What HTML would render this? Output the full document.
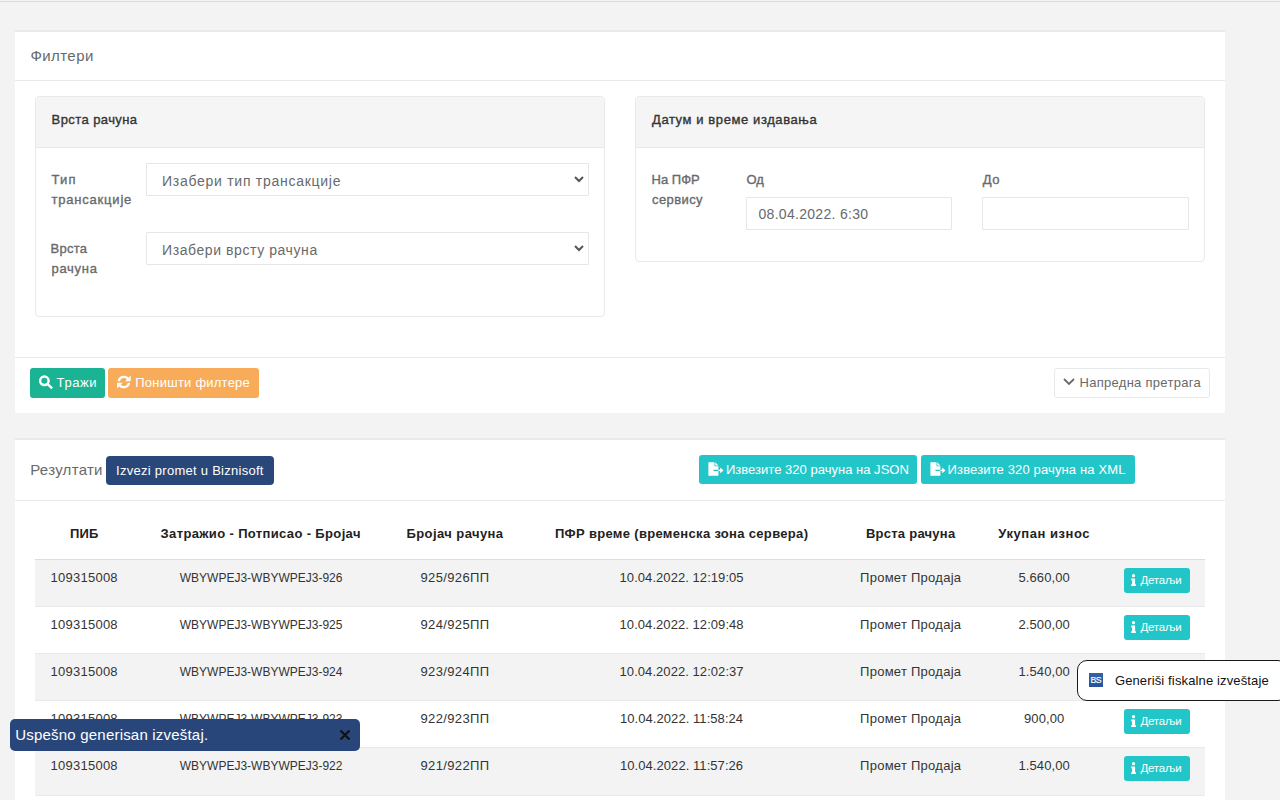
<!DOCTYPE html>
<html lang="sr">
<head>
<meta charset="utf-8">
<title>Рачуни</title>
<style>
*{box-sizing:border-box;margin:0;padding:0}
html,body{width:1280px;height:800px;overflow:hidden}
body{background:#f3f3f4;font-family:"Liberation Sans",sans-serif;font-size:13px;color:#676a6c;position:relative}
.abs{position:absolute}
.t{position:absolute;white-space:nowrap}
.topline{left:0;top:1px;width:1280px;height:1px;background:#d9dbde}
.ibox{left:15px;width:1210px;background:#fff;border-top:2px solid #e7eaec}
.hsep{left:15px;width:1210px;height:1px;background:#e7eaec}
.ttl{font-size:15px;color:#676a6c;line-height:20px}
.panel{border:1px solid #e7eaec;border-radius:4px;background:#fff;overflow:hidden}
.panel .phbg{height:51px;background:#f5f5f5;border-bottom:1px solid #e7eaec}
.ph{font-weight:normal;-webkit-text-stroke:0.35px #333;color:#333;font-size:13px;line-height:20px}
.lbl{font-weight:normal;-webkit-text-stroke:0.35px #676a6c;color:#676a6c;font-size:13px;line-height:20px}
.ctl{border:1px solid #e5e6e7;background:#fff;border-radius:1px}
.ctlt{color:#676a6c;font-size:14px;line-height:17px}
.btn{border-radius:3px;color:#fff;font-size:13px}
.btn .t{line-height:17px}
.thead{background:#fff}
.c{position:absolute;width:400px;text-align:center;white-space:nowrap;font-size:13px;line-height:18px}
.th{top:11px;font-weight:bold;color:#222}
.td{top:9px;color:#333}
.tr{border-top:1px solid #e7eaec;background:#fff}
.tr.odd{background:#f3f3f3}
.tr.first{border-top-color:#ddd}
.dbtn{position:absolute;left:1089px;top:8px;width:66px;height:25px;background:#23c6c8;border-radius:3px;color:#fff;font-size:11.5px}
.dbtn .ii{position:absolute;left:6.6px;top:5.8px}
.dbtn .t{line-height:15px;top:5px}
.c2 span{display:inline-block;transform:scaleX(0.923);transform-origin:50% 50%}
.h1{letter-spacing:0.100px}
.c1{letter-spacing:0.250px}
.h2{letter-spacing:0.358px}
.c2{letter-spacing:0.000px}
.h3{letter-spacing:0.416px}
.c3{letter-spacing:0.374px}
.h4{letter-spacing:0.321px}
.c4{letter-spacing:0.060px}
.h5{letter-spacing:0.258px}
.c5{letter-spacing:0.259px}
.h6{letter-spacing:0.560px}
.c6{letter-spacing:0.083px}
.dbtn .t{left:16.40px;letter-spacing:-0.160px}
</style>
</head>
<body>
<div class="abs topline"></div>
<!-- FILTER BOX -->
<div class="abs ibox" style="top:30px;height:383px"></div>
<div id="t_filteri" class="t ttl" style="top:46px;letter-spacing:0.432px;left:30.40px;">Филтери</div>
<div class="abs hsep" style="top:80px"></div>
<div class="abs panel" style="left:35px;top:96px;width:570px;height:221px"><div class="phbg"></div></div>
<div id="t_ph1" class="t ph" style="top:110px;letter-spacing:0.417px;left:51.60px;">Врста рачуна</div>
<div id="l_tip" class="t lbl" style="top:170px;letter-spacing:1.150px;left:51.50px;">Тип</div>
<div id="l_trans" class="t lbl" style="top:190px;letter-spacing:0.800px;left:51.50px;">трансакције</div>
<div class="abs ctl" style="left:146px;top:163px;width:443px;height:33px"></div>
<div id="s1" class="t ctlt" style="top:173px;letter-spacing:0.727px;left:162.00px;">Изабери тип трансакције</div>
<div id="l_vrsta" class="t lbl" style="top:239px;letter-spacing:0.276px;left:50.50px;">Врста</div>
<div id="l_racuna" class="t lbl" style="top:259px;letter-spacing:0.700px;left:51.50px;">рачуна</div>
<div class="abs ctl" style="left:146px;top:232px;width:443px;height:33px"></div>
<div id="s2" class="t ctlt" style="top:242px;letter-spacing:0.579px;left:162.00px;">Изабери врсту рачуна</div>
<svg class="abs" style="left:574px;top:176px" width="10" height="7" viewBox="0 0 10 7"><path d="M1 1L5 5L9 1" fill="none" stroke="#555" stroke-width="2"/></svg>
<svg class="abs" style="left:574px;top:245px" width="10" height="7" viewBox="0 0 10 7"><path d="M1 1L5 5L9 1" fill="none" stroke="#555" stroke-width="2"/></svg>
<div class="abs panel" style="left:635px;top:96px;width:570px;height:166px"><div class="phbg"></div></div>
<div id="t_ph2" class="t ph" style="top:110px;letter-spacing:0.591px;left:652.00px;">Датум и време издавања</div>
<div id="l_napfr" class="t lbl" style="top:170px;letter-spacing:0.000px;left:651.60px;">На ПФР</div>
<div id="l_servisu" class="t lbl" style="top:190px;letter-spacing:0.400px;left:652.00px;">сервису</div>
<div id="l_od" class="t lbl" style="top:170px;letter-spacing:-0.100px;left:746.50px;">Од</div>
<div id="l_do" class="t lbl" style="top:170px;letter-spacing:0.600px;left:982.80px;">До</div>
<div class="abs ctl" style="left:746px;top:197px;width:206px;height:33px"></div>
<div id="in1" class="t ctlt" style="top:206px;letter-spacing:0.297px;left:758.50px;">08.04.2022. 6:30</div>
<div class="abs ctl" style="left:982px;top:197px;width:207px;height:33px"></div>
<div class="abs hsep" style="top:357px"></div>
<div class="abs btn" style="left:30px;top:368px;width:75px;height:30px;background:#1ab394">
  <svg class="abs" style="left:8px;top:7px" width="16" height="15" viewBox="0 0 16 15"><circle cx="6.35" cy="5.8" r="4.25" fill="none" stroke="#fff" stroke-width="2.4"/><path d="M9.6 9.1L13.2 12.6" stroke="#fff" stroke-width="2.5" stroke-linecap="square"/></svg>
  <span id="t_trazi" class="t" style="top:6px;letter-spacing:0.575px;left:26.60px;">Тражи</span>
</div>
<div class="abs btn" style="left:108px;top:368px;width:151px;height:30px;background:#f8ac59">
  <svg class="abs" style="left:9px;top:7px" width="14" height="14" viewBox="0 0 14 14"><path d="M1.8 6.1A5.2 5.2 0 0 1 11.4 4.4" fill="none" stroke="#fff" stroke-width="2.3"/><path d="M13.7 0.6V6.2H8.1z" fill="#fff"/><path d="M12 7.9A5.2 5.2 0 0 1 2.4 9.6" fill="none" stroke="#fff" stroke-width="2.3"/><path d="M0.1 13.4V7.8H5.7z" fill="#fff"/></svg>
  <span id="t_ponisti" class="t" style="top:6px;letter-spacing:0.228px;left:27.30px;">Поништи филтере</span>
</div>
<div class="abs btn" style="left:1054px;top:368px;width:156px;height:30px;background:#fff;border:1px solid #e7eaec;color:#676a6c">
  <svg class="abs" style="left:7.8px;top:9.2px" width="12" height="8" viewBox="0 0 12 8"><path d="M1 1L6 5.9L11 1" fill="none" stroke="#676a6c" stroke-width="1.8"/></svg>
  <span id="t_napredna" class="t" style="top:5px;letter-spacing:0.286px;left:24.50px;">Напредна претрага</span>
</div>
<!-- RESULTS BOX -->
<div class="abs ibox" style="top:438px;height:362px"></div>
<div id="t_rez" class="t ttl" style="top:460px;letter-spacing:0.293px;left:30.20px;">Резултати</div>
<div class="abs btn" style="left:106px;top:456px;width:168px;height:29px;background:#2a4779;border-radius:4px">
  <span id="t_izvezi" class="t" style="top:6px;letter-spacing:0.270px;left:10.10px;">Izvezi promet u Biznisoft</span>
</div>
<div class="abs btn" style="left:699px;top:455px;width:218px;height:29px;background:#23c6c8">
  <svg class="abs" style="left:8.5px;top:7px" width="16" height="14" viewBox="0 0 16 14"><path d="M0.4 0.3H6.5V4.2H10.4V7.8H5.4V9.0H10.4V13.8H0.4z" fill="#fff"/><path d="M7.3 0.3L10.4 3.4H7.3z" fill="#fff"/><path d="M10.4 7.8H12.2V5.6L15.5 8.4L12.2 11.2V9.0H10.4z" fill="#fff"/></svg>
  <span id="t_json" class="t" style="top:6px;letter-spacing:0.019px;left:27.00px;">Извезите 320 рачуна на JSON</span>
</div>
<div class="abs btn" style="left:921px;top:455px;width:214px;height:29px;background:#23c6c8">
  <svg class="abs" style="left:8.5px;top:7px" width="16" height="14" viewBox="0 0 16 14"><path d="M0.4 0.3H6.5V4.2H10.4V7.8H5.4V9.0H10.4V13.8H0.4z" fill="#fff"/><path d="M7.3 0.3L10.4 3.4H7.3z" fill="#fff"/><path d="M10.4 7.8H12.2V5.6L15.5 8.4L12.2 11.2V9.0H10.4z" fill="#fff"/></svg>
  <span id="t_xml" class="t" style="top:6px;letter-spacing:0.136px;left:26.60px;">Извезите 320 рачуна на XML</span>
</div>
<div class="abs hsep" style="top:500px"></div>
<!-- TABLE -->
<div class="abs thead" style="left:35px;top:514px;width:1170px;height:45px">
  <div class="c th h1" style="left:-150.8px"><span>ПИБ</span></div>
  <div class="c th h2" style="left:25.7px"><span>Затражио - Потписао - Бројач</span></div>
  <div class="c th h3" style="left:220.0px"><span>Бројач рачуна</span></div>
  <div class="c th h4" style="left:446.6px"><span>ПФР време (временска зона сервера)</span></div>
  <div class="c th h5" style="left:675.7px"><span>Врста рачуна</span></div>
  <div class="c th h6" style="left:809.2px"><span>Укупан износ</span></div>
</div>
<div class="abs tr odd first" style="left:35px;top:559px;width:1170px;height:47px">
  <div class="c td c1" style="left:-150.8px"><span>109315008</span></div>
  <div class="c td c2" style="left:25.7px"><span>WBYWPEJ3-WBYWPEJ3-926</span></div>
  <div class="c td c3" style="left:220.0px"><span>925/926ПП</span></div>
  <div class="c td c4" style="left:446.6px"><span>10.04.2022. 12:19:05</span></div>
  <div class="c td c5" style="left:675.7px"><span>Промет Продаја</span></div>
  <div class="c td c6" style="left:809.2px"><span>5.660,00</span></div>
  <div class="dbtn"><svg class="ii" viewBox="0 0 5 12" width="5" height="12"><circle cx="2.5" cy="1.7" r="1.6" fill="#fff"/><path d="M0.2 10.2h0.9V6.2H0.2V4.5h3.9v5.7h0.8V11.9H0.2z" fill="#fff"/></svg><span class="t">Детаљи</span></div>
</div>
<div class="abs tr" style="left:35px;top:606px;width:1170px;height:47px">
  <div class="c td c1" style="left:-150.8px"><span>109315008</span></div>
  <div class="c td c2" style="left:25.7px"><span>WBYWPEJ3-WBYWPEJ3-925</span></div>
  <div class="c td c3" style="left:220.0px"><span>924/925ПП</span></div>
  <div class="c td c4" style="left:446.6px"><span>10.04.2022. 12:09:48</span></div>
  <div class="c td c5" style="left:675.7px"><span>Промет Продаја</span></div>
  <div class="c td c6" style="left:809.2px"><span>2.500,00</span></div>
  <div class="dbtn"><svg class="ii" viewBox="0 0 5 12" width="5" height="12"><circle cx="2.5" cy="1.7" r="1.6" fill="#fff"/><path d="M0.2 10.2h0.9V6.2H0.2V4.5h3.9v5.7h0.8V11.9H0.2z" fill="#fff"/></svg><span class="t">Детаљи</span></div>
</div>
<div class="abs tr odd" style="left:35px;top:653px;width:1170px;height:47px">
  <div class="c td c1" style="left:-150.8px"><span>109315008</span></div>
  <div class="c td c2" style="left:25.7px"><span>WBYWPEJ3-WBYWPEJ3-924</span></div>
  <div class="c td c3" style="left:220.0px"><span>923/924ПП</span></div>
  <div class="c td c4" style="left:446.6px"><span>10.04.2022. 12:02:37</span></div>
  <div class="c td c5" style="left:675.7px"><span>Промет Продаја</span></div>
  <div class="c td c6" style="left:809.2px"><span>1.540,00</span></div>
  <div class="dbtn"><svg class="ii" viewBox="0 0 5 12" width="5" height="12"><circle cx="2.5" cy="1.7" r="1.6" fill="#fff"/><path d="M0.2 10.2h0.9V6.2H0.2V4.5h3.9v5.7h0.8V11.9H0.2z" fill="#fff"/></svg><span class="t">Детаљи</span></div>
</div>
<div class="abs tr" style="left:35px;top:700px;width:1170px;height:47px">
  <div class="c td c1" style="left:-150.8px"><span>109315008</span></div>
  <div class="c td c2" style="left:25.7px"><span>WBYWPEJ3-WBYWPEJ3-923</span></div>
  <div class="c td c3" style="left:220.0px"><span>922/923ПП</span></div>
  <div class="c td c4" style="left:446.6px"><span>10.04.2022. 11:58:24</span></div>
  <div class="c td c5" style="left:675.7px"><span>Промет Продаја</span></div>
  <div class="c td c6" style="left:809.2px"><span>900,00</span></div>
  <div class="dbtn"><svg class="ii" viewBox="0 0 5 12" width="5" height="12"><circle cx="2.5" cy="1.7" r="1.6" fill="#fff"/><path d="M0.2 10.2h0.9V6.2H0.2V4.5h3.9v5.7h0.8V11.9H0.2z" fill="#fff"/></svg><span class="t">Детаљи</span></div>
</div>
<div class="abs tr odd" style="left:35px;top:747px;width:1170px;height:48px">
  <div class="c td c1" style="left:-150.8px"><span>109315008</span></div>
  <div class="c td c2" style="left:25.7px"><span>WBYWPEJ3-WBYWPEJ3-922</span></div>
  <div class="c td c3" style="left:220.0px"><span>921/922ПП</span></div>
  <div class="c td c4" style="left:446.6px"><span>10.04.2022. 11:57:26</span></div>
  <div class="c td c5" style="left:675.7px"><span>Промет Продаја</span></div>
  <div class="c td c6" style="left:809.2px"><span>1.540,00</span></div>
  <div class="dbtn"><svg class="ii" viewBox="0 0 5 12" width="5" height="12"><circle cx="2.5" cy="1.7" r="1.6" fill="#fff"/><path d="M0.2 10.2h0.9V6.2H0.2V4.5h3.9v5.7h0.8V11.9H0.2z" fill="#fff"/></svg><span class="t">Детаљи</span></div>
</div>
<div class="abs tr" style="left:35px;top:795px;width:1170px;height:47px">
  <div class="c td c1" style="left:-150.8px"><span>109315008</span></div>
  <div class="c td c2" style="left:25.7px"><span>WBYWPEJ3-WBYWPEJ3-921</span></div>
  <div class="c td c3" style="left:220.0px"><span>920/921ПП</span></div>
  <div class="c td c4" style="left:446.6px"><span>10.04.2022. 11:55:10</span></div>
  <div class="c td c5" style="left:675.7px"><span>Промет Продаја</span></div>
  <div class="c td c6" style="left:809.2px"><span>1.200,00</span></div>
  <div class="dbtn"><svg class="ii" viewBox="0 0 5 12" width="5" height="12"><circle cx="2.5" cy="1.7" r="1.6" fill="#fff"/><path d="M0.2 10.2h0.9V6.2H0.2V4.5h3.9v5.7h0.8V11.9H0.2z" fill="#fff"/></svg><span class="t">Детаљи</span></div>
</div>
<!-- TOOLTIP -->
<div class="abs" style="left:1077px;top:660px;width:209px;height:41px;background:#fff;border:1px solid #1a1a1a;border-radius:10px 8px 8px 10px"></div>
<div class="abs" style="left:1089px;top:673px;width:14px;height:14px;background:linear-gradient(#3361a9,#29529c);color:#fff;font-size:8.8px;-webkit-text-stroke:0.15px #fff;line-height:14.6px;text-align:center;letter-spacing:-0.5px;text-indent:-0.5px">BS</div>
<div id="t_tip" class="t" style="top:672px;font-size:13px;line-height:18px;color:#111;letter-spacing:0.135px;left:1114.90px;">Generiši fiskalne izveštaje</div>
<!-- TOAST -->
<div class="abs" style="left:10px;top:719px;width:350px;height:32px;background:#29467a;border-radius:5px"></div>
<div id="t_toast" class="t" style="top:725px;font-size:15px;line-height:20px;color:#fff;letter-spacing:0.200px;left:15.30px;">Uspešno generisan izveštaj.</div>
<svg class="abs" style="left:339px;top:728.5px" width="12" height="12" viewBox="0 0 12 12"><path d="M1.5 1.5L10.5 10.5M10.5 1.5L1.5 10.5" stroke="#111" stroke-width="2.1"/></svg>
</body>
</html>
